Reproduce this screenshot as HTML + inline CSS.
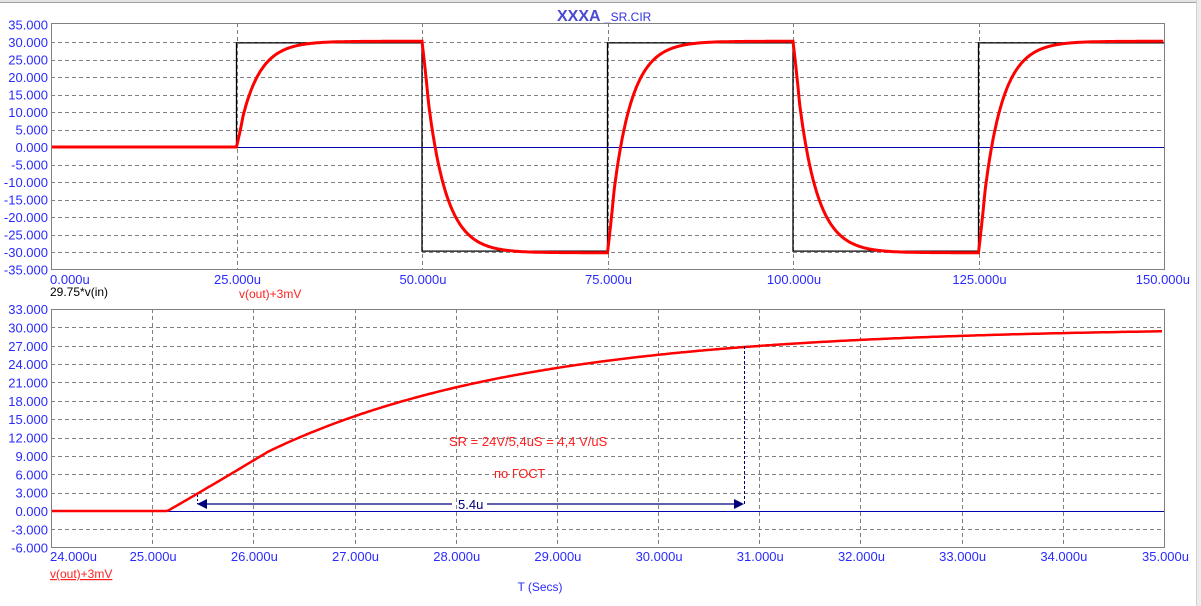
<!DOCTYPE html>
<html><head><meta charset="utf-8"><style>
html,body{margin:0;padding:0;background:#fff;width:1201px;height:606px;overflow:hidden}
svg{display:block}
text{font-family:"Liberation Sans",Arial,sans-serif}
.yl{fill:#2a2aff;font-size:13px;text-anchor:end}
.xl{fill:#2a2aff;font-size:13px;text-anchor:middle}
</style></head><body>
<svg id="s" width="1201" height="606" viewBox="0 0 1201 606" xmlns="http://www.w3.org/2000/svg">
<rect x="0" y="0" width="1201" height="2" fill="#e4e4e4"/>
<line x1="0" y1="2.5" x2="1197" y2="2.5" stroke="#a0a0a0"/>
<rect x="1197" y="0" width="4" height="606" fill="#ececec"/>
<line x1="1196.5" y1="0" x2="1196.5" y2="606" stroke="#d0d0d0"/>
<text x="557" y="21" font-size="16" font-weight="bold" fill="#4a4ad0">XXXA</text>
<text x="604" y="21" font-size="12" fill="#3030e0">_SR.CIR</text>
<g id="grid" stroke="#808080" stroke-dasharray="4,3" fill="none"></g>
<line x1="51" y1="147.5" x2="1164" y2="147.5" stroke="#0000b0"/>
<line x1="51" y1="511.5" x2="1164" y2="511.5" stroke="#0000b0"/>
<path id="sq" fill="none" stroke="#000" stroke-width="1.3"/>
<path id="r1" fill="none" stroke="#f00" stroke-width="3"/>
<path id="r2" fill="none" stroke="#f00" stroke-width="2.5"/>
<rect x="51.5" y="23.5" width="1113" height="246" fill="none" stroke="#808080"/>
<rect x="51.5" y="309.5" width="1113" height="238" fill="none" stroke="#808080"/>
<g id="lab"></g>
<line x1="198" y1="504" x2="452" y2="504" stroke="#00007a" stroke-width="1.3"/>
<line x1="487" y1="504" x2="742" y2="504" stroke="#00007a" stroke-width="1.3"/>
<polygon points="197,504 207,499 207,509" fill="#00007a"/>
<polygon points="744,504 734,499 734,509" fill="#00007a"/>
<line x1="744.5" y1="346" x2="744.5" y2="504" stroke="#00007a" stroke-dasharray="3,2"/>
<line x1="197.5" y1="495" x2="197.5" y2="504" stroke="#00007a" stroke-dasharray="2,2"/>
<text x="458" y="509" font-size="13" fill="#00007a">5.4u</text>
<text x="449" y="446" font-size="13" fill="#ff2020">SR = 24V/5,4uS = 4,4 V/uS</text>
<text x="494" y="478" font-size="13" fill="#ff2020">по ГОСТ</text>
<text x="50" y="296" font-size="12" fill="#000">29.75*v(in)</text>
<text x="239" y="298" font-size="12" fill="#ff2020">v(out)+3mV</text>
<text x="50" y="578" font-size="12" fill="#ff2020" text-decoration="underline">v(out)+3mV</text>
<text x="540" y="591" font-size="12" fill="#2a2aff" text-anchor="middle">T (Secs)</text>
</svg>
<script>
var NS="http://www.w3.org/2000/svg";
function el(p,t,a,txt){var e=document.createElementNS(NS,t);for(var k in a)e.setAttribute(k,a[k]);if(txt)e.textContent=txt;p.appendChild(e);return e;}
var g=document.getElementById('grid'),lab=document.getElementById('lab');
var X0=51,X1=1164;
function ty(v){return 147-v*3.5;}
function tx(t){return X0+(t/150)*(X1-X0);}
for(var v=-30;v<=30;v+=5){if(v!=0)el(g,'line',{x1:X0,x2:X1,y1:Math.round(ty(v))+.5,y2:Math.round(ty(v))+.5});}
for(var t=25;t<150;t+=25){var x=Math.round(tx(t))+.5;el(g,'line',{x1:x,x2:x,y1:23,y2:270});}
for(var v=-35;v<=35;v+=5){el(lab,'text',{'class':'yl',x:48,y:ty(v)+5},v.toFixed(3));}
for(var t=0;t<=150;t+=25){var a=t==0?'start':(t==150?'end':'middle');var x=t==0?50:(t==150?1190:tx(t)+1);var e=el(lab,'text',{'class':'xl',x:x,y:284},t.toFixed(3)+'u');e.style.textAnchor=a;}
function by(v){return 511-v*6.12;}
function bx(t){return X0+(t-24)/11*(X1-X0);}
for(var v=-3;v<=30;v+=3){if(v!=0)el(g,'line',{x1:X0,x2:X1,y1:Math.round(by(v))+.5,y2:Math.round(by(v))+.5});}
for(var t=25;t<35;t++){var x=Math.round(bx(t))+.5;el(g,'line',{x1:x,x2:x,y1:309,y2:548});}
for(var v=-6;v<=33;v+=3){el(lab,'text',{'class':'yl',x:48,y:by(v)+5},v.toFixed(3));}
for(var t=24;t<=35;t++){var x=t==24?50:(t==35?1189:bx(t)+1);var e=el(lab,'text',{'class':'xl',x:x,y:561},t.toFixed(3)+'u');e.style.textAnchor=t==24?'start':(t==35?'end':'middle');}
var tau=2.55;
function rise(d){if(d<=0)return 0;var s=1-Math.exp(-d/tau);var k=Math.min(1,d/0.9);return s*(0.75+0.25*k);}
function sq(t){if(t<25)return 0;var p=Math.floor((t-25)/25);return p%2==0?29.75:-29.75;}
function out(t){if(t<25)return 0;var n=Math.floor((t-25)/25);var st=25+n*25;var prev=n==0?0:(n%2==1?30.2:-30.2);var tgt=n%2==0?30.2:-30.2;return prev+(tgt-prev)*rise(t-st);}
var d='';for(var t=0;t<=149.95;t+=0.1){d+=(t==0?'M':'L')+tx(t).toFixed(1)+','+ty(out(t)).toFixed(1);}
document.getElementById('r1').setAttribute('d',d);
var q='M'+tx(0)+','+ty(0);var last=0;for(var t=25;t<150;t+=25){q+='L'+tx(t)+','+ty(last);last=sq(t+0.01);q+='L'+tx(t)+','+ty(last);}
q+='L'+tx(150)+','+ty(last);
document.getElementById('sq').setAttribute('d',q);
var d2='';for(var t=24;t<=35;t+=0.02){var v=t<25.15?0:30*(1-Math.exp(-(t-25.15)/tau))*(0.8+0.2*Math.min(1,(t-25.15)/1.0));d2+=(t==24?'M':'L')+bx(t).toFixed(1)+','+by(v).toFixed(1);}
document.getElementById('r2').setAttribute('d',d2);
</script>
</body></html>
